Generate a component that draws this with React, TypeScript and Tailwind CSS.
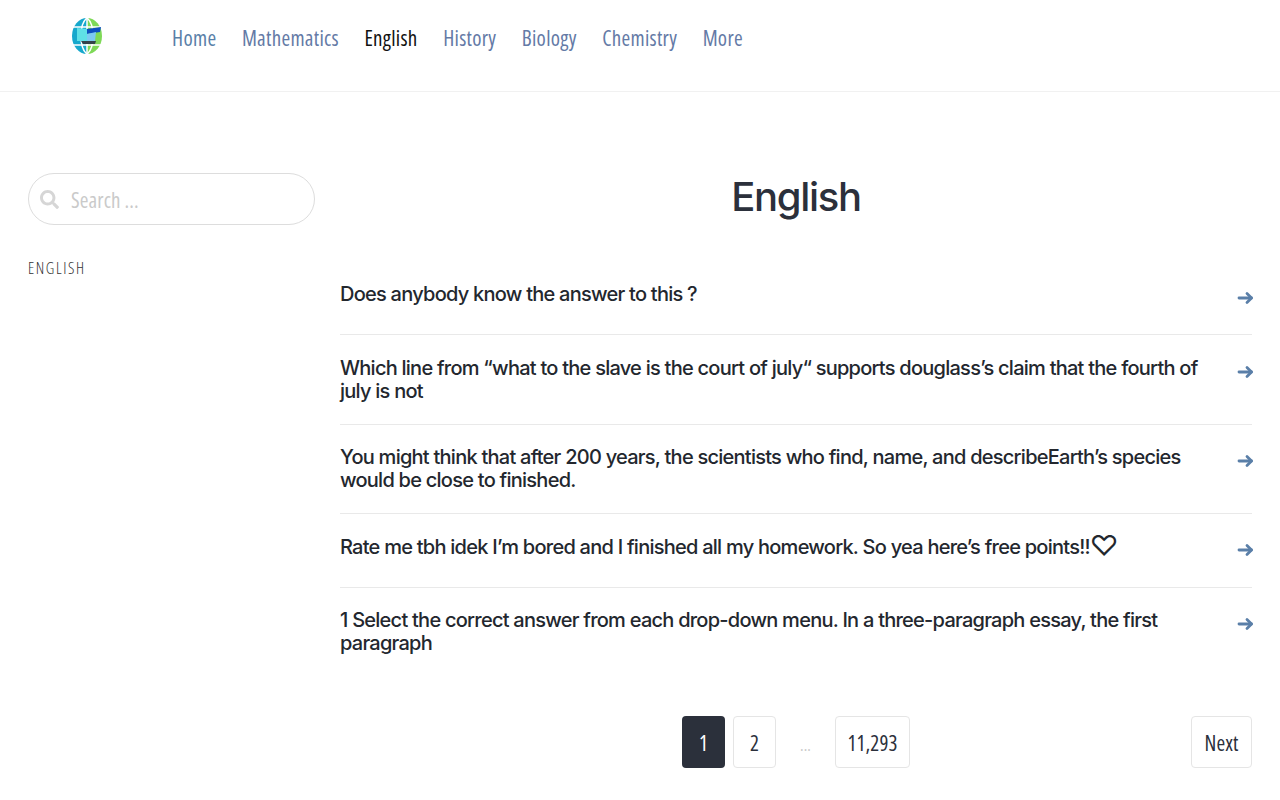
const nav = [
  { label: "Home", color: "text-[#5a7fa8]" },
  { label: "Mathematics", color: "text-[#647aa6]" },
  { label: "English", color: "text-[#111111]" },
  { label: "History", color: "text-[#647aa6]" },
  { label: "Biology", color: "text-[#647aa6]" },
  { label: "Chemistry", color: "text-[#647aa6]" },
  { label: "More", color: "text-[#647aa6]" },
];

const rows: { text: React.ReactNode; cls: string }[] = [
  { text: "Does anybody know the answer to this ?", cls: "pt-[23px] pb-[21px]" },
  { text: "Which line from “what to the slave is the court of july“ supports douglass’s claim that the fourth of july is not", cls: "pt-[22px] pb-[21px]" },
  { text: "You might think that after 200 years, the scientists who find, name, and describeEarth’s species would be close to finished.", cls: "pt-[21px] pb-[21px]" },
  {
    text: (
      <>
        Rate me tbh idek I’m bored and I finished all my homework. So yea here’s free points!!
        <span className="text-[28px] font-normal leading-[23px] align-[-2px]">♡</span>
      </>
    ),
    cls: "pt-[21px] pb-[22px]",
  },
  { text: "1 Select the correct answer from each drop-down menu. In a three-paragraph essay, the first paragraph", cls: "pt-[21px] pb-[21px]" },
];

function Logo() {
  return (
    <svg width="32" height="36" viewBox="0 0 32 36" className="block">
      <path d="M16 0 A15 18 0 0 0 16 36Z" fill="#17a8cc" />
      <path d="M16 0 A15 18 0 0 1 16 36Z" fill="#7ed957" />
      <g fill="none" stroke="#ffffff" strokeWidth="1.500">
        <path d="M16 0V36" />
        <path d="M16 0C8 6 8 30 16 36" />
        <path d="M16 0C24 6 24 30 16 36" />
        <path d="M2 9H30" />
        <path d="M2 27H30" />
      </g>
      <path d="M6 10 L16 11 L16 23 L6 23Z" fill="#5fe0e6" />
      <path d="M16 11 L30 9 L29 14 L16 16Z" fill="#0d4fc0" />
      <path d="M16 16 L25 14 L24 23 L16 23Z" fill="#7ccaf2" />
      <path d="M10 23 L25 23 L24 26 L12 26Z" fill="#33424a" />
    </svg>
  );
}

function Arrow() {
  return (
    <svg width="18" height="14" viewBox="0 0 18 14" fill="none" stroke="#5a7fa8" strokeWidth="2.800" strokeLinecap="round" strokeLinejoin="round" className="mr-[-2px]">
      <path d="M3 7H15.500" />
      <path d="M11 2.500L15.500 7L11 11.500" />
    </svg>
  );
}

export default function App() {
  return (
    <div className="min-h-[800px] bg-white font-['Open_Sans',sans-serif] font-stretch-[75%]">
      <header className="flex h-[92px] items-start border-b border-[#f1f1f1]">
        <div className="ml-[71px] mt-[18px] w-[101px] shrink-0">
          <Logo />
        </div>
        <nav className="mt-[24px] flex gap-[25.5px] text-[21px] leading-[28px] tracking-[0.3px]">
          {nav.map((n) => (
            <a key={n.label} className={n.color}>
              {n.label}
            </a>
          ))}
        </nav>
      </header>
      <div className="flex">
        <aside className="ml-[28px] w-[312px] shrink-0 pt-[81px]">
          <div className="flex h-[52px] w-[287px] items-center rounded-[26px] border border-[#dddddd] pl-[11px]">
            <svg width="19" height="19" viewBox="0 0 512 512" fill="#d6d6d6">
              <path d="M505 442.700L405.300 343c-4.500-4.500-10.600-7-17-7H372c27.600-35.300 44-79.700 44-128C416 93.100 322.900 0 208 0S0 93.100 0 208s93.100 208 208 208c48.300 0 92.700-16.400 128-44v16.300c0 6.400 2.500 12.500 7 17l99.700 99.700c9.400 9.400 24.600 9.400 33.900 0l28.300-28.300c9.400-9.400 9.400-24.600.1-34zM208 336c-70.700 0-128-57.200-128-128 0-70.700 57.200-128 128-128 70.700 0 128 57.200 128 128 0 70.700-57.200 128-128 128z" />
            </svg>
            <span className="ml-[12px] pt-[4px] text-[21px] tracking-[0.1px] text-[#cacaca]">Search ...</span>
          </div>
          <div className="mt-[33px] text-[16px] font-light leading-[20px] tracking-[1.6px] text-[#333333]">ENGLISH</div>
        </aside>
        <main className="w-[912px] pt-[77px]">
          <h1 className="text-center font-['Inter',sans-serif] text-[40px] font-medium leading-[56px] tracking-[-1.3px] text-[#2b303b]">
            English
          </h1>
          <div className="mt-[35px]">
            {rows.map((r, i) => (
              <div
                key={i}
                className={`flex justify-between ${r.cls} ${i < rows.length - 1 ? "border-b border-[#e9e9e9]" : ""}`}
              >
                <div className="w-[880px] font-['Inter',sans-serif] text-[20px] font-medium leading-[23px] tracking-[-0.75px] text-[#23272e]">
                  {r.text}
                </div>
                <div className="flex h-[30px] items-center">
                  <Arrow />
                </div>
              </div>
            ))}
          </div>
          <div className="relative mt-[40px] flex h-[52px] justify-center gap-[8px] text-[21px] tracking-[0.1px] text-[#2b303b]">
            <span className="flex w-[43px] items-center justify-center rounded-[4px] bg-[#2b303b] pt-[3px] text-white">1</span>
            <span className="flex w-[43px] items-center justify-center rounded-[4px] border border-[#e5e5e5] pt-[3px]">2</span>
            <span className="flex w-[43px] items-center justify-center pt-[6px] text-[16px] text-[#c9c9c9]">...</span>
            <span className="flex w-[75px] items-center justify-center rounded-[4px] border border-[#e5e5e5] pt-[3px]">11,293</span>
            <span className="absolute right-0 top-0 flex h-[52px] w-[61px] items-center justify-center rounded-[4px] border border-[#e5e5e5] pt-[3px]">
              Next
            </span>
          </div>
        </main>
      </div>
    </div>
  );
}
